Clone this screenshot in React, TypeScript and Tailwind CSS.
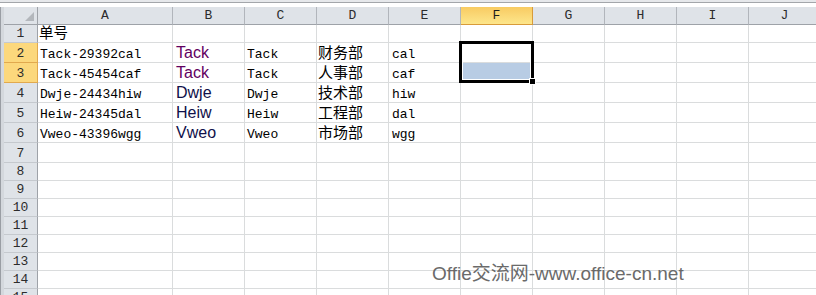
import React from "react";

type Col = { l: string; w: number };
const cols: Col[] = [
  { l: "A", w: 135 },
  { l: "B", w: 72 },
  { l: "C", w: 72 },
  { l: "D", w: 72 },
  { l: "E", w: 72 },
  { l: "F", w: 72 },
  { l: "G", w: 72 },
  { l: "H", w: 72 },
  { l: "I", w: 72 },
  { l: "J", w: 72 },
];

const rowHeights = [18, 20, 20, 20, 20, 20, 20, 18, 18, 18, 18, 18, 18, 18, 18];

const mono = { fontFamily: '"Liberation Mono", "Noto Sans CJK SC", monospace' };

type Row = { a: string; b: string; bColor: string; c: string; d: string; e: string };
const data: Row[] = [
  { a: "Tack-29392cal", b: "Tack", bColor: "text-[#62005f]", c: "Tack", d: "财务部", e: "cal" },
  { a: "Tack-45454caf", b: "Tack", bColor: "text-[#62005f]", c: "Tack", d: "人事部", e: "caf" },
  { a: "Dwje-24434hiw", b: "Dwje", bColor: "text-[#10104a]", c: "Dwje", d: "技术部", e: "hiw" },
  { a: "Heiw-24345dal", b: "Heiw", bColor: "text-[#10104a]", c: "Heiw", d: "工程部", e: "dal" },
  { a: "Vweo-43396wgg", b: "Vweo", bColor: "text-[#10104a]", c: "Vweo", d: "市场部", e: "wgg" },
];

function MonoText({ t }: { t: string }) {
  return (
    <span className="font-['Liberation_Mono',monospace] text-[13px] leading-none pb-[1px] pl-[2px] text-black whitespace-nowrap">
      {t}
    </span>
  );
}

function Cell({ w, r, ci }: { w: number; r: number; ci: number }) {
  const sel = ci === 5 && r === 3;
  let content: React.ReactNode = null;
  if (r === 1 && ci === 0) {
    content = (
      <span className="font-['Noto_Sans_CJK_SC',sans-serif] text-[14.5px] leading-none pb-[3px] pl-[1px] text-black">
        单号
      </span>
    );
  } else if (r >= 2 && r <= 6) {
    const d = data[r - 2];
    if (ci === 0) content = <MonoText t={d.a} />;
    if (ci === 1)
      content = (
        <span className={`font-['Liberation_Sans',sans-serif] text-[16px] leading-none pb-[1px] pl-[3px] ${d.bColor}`}>
          {d.b}
        </span>
      );
    if (ci === 2) content = <MonoText t={d.c} />;
    if (ci === 3)
      content = (
        <span className="font-['Noto_Sans_CJK_SC',sans-serif] text-[15px] leading-none pb-[3px] pl-[1px] text-black">
          {d.d}
        </span>
      );
    if (ci === 4)
      content = (
        <span className="font-['Liberation_Mono',monospace] text-[13px] leading-none pb-[1px] pl-[3px] text-black">
          {d.e}
        </span>
      );
  }
  return (
    <div
      className={`shrink-0 h-full border-r border-b border-[#dadcdd] flex items-end overflow-visible ${sel ? "bg-[#b8cce4]" : "bg-white"}`}
      style={{ width: w }}
    >
      {content}
    </div>
  );
}

export default function App() {
  return (
    <div className="relative w-[816px] h-[295px] overflow-hidden bg-white" style={mono}>
      {/* top strip */}
      <div className="h-[7px] flex flex-col">
        <div className="h-[2px] bg-[#e6e8eb]" />
        <div className="h-[1px] bg-[#a3a6aa]" />
        <div className="h-[4px] bg-white" />
      </div>

      {/* header row */}
      <div className="flex h-[18px]">
        <div className="w-[4px] shrink-0 h-full bg-[#d4d8dd] border-l border-[#9a9ea4]" />
        <div className="w-[34px] shrink-0 h-full bg-[#dfe3e8] border-r border-b border-[#9ea2a8] relative">
          <svg className="absolute right-[3px] bottom-[3px]" width="9" height="9" viewBox="0 0 9 9">
            <polygon points="9,0 9,9 0,9" fill="#b3b7bc" />
          </svg>
        </div>
        {cols.map((c, i) =>
          i === 5 ? (
            <div
              key={c.l}
              className="shrink-0 h-full bg-gradient-to-b from-[#f8cb62] to-[#fde68b] border-r border-b border-l-0 border-[#d89b3a] flex items-center justify-center"
              style={{ width: c.w }}
            >
              <span className="font-['Liberation_Mono',monospace] text-[13px] leading-none text-[#1c1c1c]">{c.l}</span>
            </div>
          ) : (
            <div
              key={c.l}
              className="shrink-0 h-full bg-[#dfe3e8] border-r border-[#b1b5bb] border-b border-b-[#9ea2a8] flex items-center justify-center"
              style={{ width: c.w }}
            >
              <span className="font-['Liberation_Mono',monospace] text-[13px] leading-none text-[#2c2c2c]">{c.l}</span>
            </div>
          )
        )}
      </div>

      {/* body rows */}
      {rowHeights.map((h, idx) => {
        const r = idx + 1;
        const selRow = r === 2 || r === 3;
        return (
          <div key={r} className="flex" style={{ height: h }}>
            <div className="w-[4px] shrink-0 h-full bg-[#d4d8dd] border-l border-[#9a9ea4]" />
            <div
              className={`w-[34px] shrink-0 h-full border-r border-b flex items-end justify-center ${
                selRow ? "bg-[#fcd87c] border-[#e1a94e]" : "bg-[#dfe3e8] border-[#9ea2a8] border-b-[#c5c9ce]"
              }`}
            >
              <span className="font-['Liberation_Mono',monospace] text-[13px] leading-none pb-[2px] text-[#2c2c2c]">{r}</span>
            </div>
            {cols.map((c, ci) => (
              <Cell key={c.l} w={c.w} r={r} ci={ci} />
            ))}
          </div>
        );
      })}

      {/* selection overlay F2:F3 */}
      <div className="absolute left-[459px] top-[41px] w-[75px] h-[42px] border-[3px] border-black shadow-[inset_0_0_0_1px_#ffffff]" />
      <div className="absolute left-[529px] top-[78px] w-[7px] h-[7px] bg-black border border-white" />

      {/* watermark */}
      <div className="absolute left-[432px] top-[264px] font-['Liberation_Sans','Noto_Sans_CJK_SC',sans-serif] text-[19px] leading-none text-[#6a6a6a] whitespace-nowrap">
        Offie交流网-www.office-cn.net
      </div>
    </div>
  );
}
